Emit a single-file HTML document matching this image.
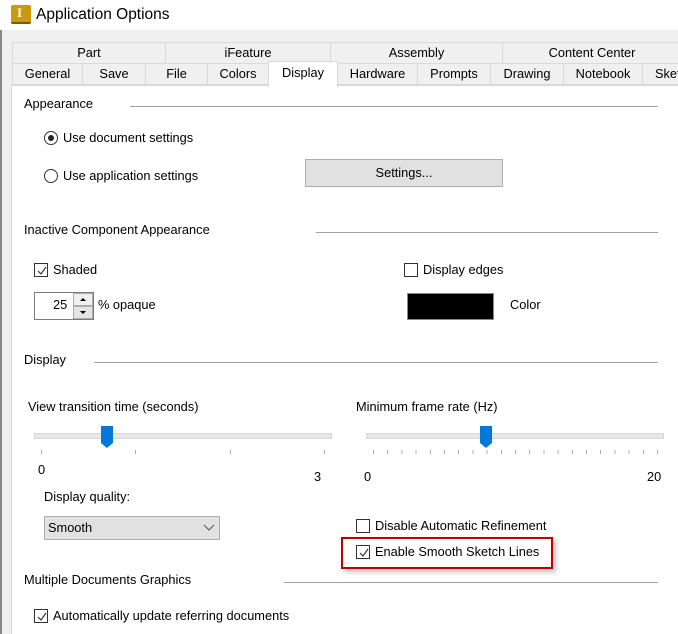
<!DOCTYPE html>
<html><head><style>
*{margin:0;padding:0;box-sizing:border-box}
html,body{width:678px;height:634px;overflow:hidden}
body{background:#f0f0f0;font-family:"Liberation Sans",sans-serif;font-size:12.8px;color:#000;position:relative}
.a{position:absolute}
.t{position:absolute;white-space:nowrap;line-height:14px}
.tab{position:absolute;background:#f0f0f0;border:1px solid #d9d9d9;text-align:center;line-height:20px}
.ln{position:absolute;height:1px;background:#a0a0a0}
.cb{position:absolute;width:14px;height:14px;border:1px solid #333;background:#fff}
.cb svg{position:absolute;left:1px;top:1px}
.rd{position:absolute;width:14px;height:14px;border:1px solid #333;border-radius:50%;background:#fff}
.tk{position:absolute;width:1px;height:4px;background:#b0b0b0;top:450px}
</style></head><body>
<div class="a" style="left:0;top:0;width:678px;height:30px;background:#fff"></div>
<div class="a" style="left:11px;top:5px;width:20px;height:19px;background:#c79a12;border-radius:2px;border-bottom:2px solid #7a5b05"></div>
<div class="t" style="left:17px;top:6px;font-weight:bold;color:#fff;font-family:'Liberation Serif',serif;font-size:13px">I</div>
<div class="t" style="left:36px;top:6px;font-size:15.5px;line-height:17px">Application Options</div>
<div class="a" style="left:0;top:30px;width:2px;height:604px;background:#888"></div>

<div class="tab" style="left:12px;top:42px;width:154px;height:22px">Part</div>
<div class="tab" style="left:165px;top:42px;width:166px;height:22px">iFeature</div>
<div class="tab" style="left:330px;top:42px;width:173px;height:22px">Assembly</div>
<div class="tab" style="left:502px;top:42px;width:180px;height:22px">Content Center</div>
<div class="tab" style="left:12px;top:63px;width:71px;height:22px">General</div>
<div class="tab" style="left:82px;top:63px;width:64px;height:22px">Save</div>
<div class="tab" style="left:145px;top:63px;width:63px;height:22px">File</div>
<div class="tab" style="left:207px;top:63px;width:62px;height:22px">Colors</div>
<div class="tab" style="left:337px;top:63px;width:81px;height:22px">Hardware</div>
<div class="tab" style="left:417px;top:63px;width:74px;height:22px">Prompts</div>
<div class="tab" style="left:490px;top:63px;width:74px;height:22px">Drawing</div>
<div class="tab" style="left:563px;top:63px;width:80px;height:22px">Notebook</div>
<div class="tab" style="left:642px;top:63px;width:60px;height:22px;text-align:left;padding-left:12px">Sketch</div>

<div class="a" style="left:11px;top:85px;width:680px;height:560px;background:#fff;border-left:1px solid #d9d9d9;border-top:1px solid #d9d9d9"></div>
<div class="a" style="left:268px;top:61px;width:70px;height:26px;background:#fff;border:1px solid #d9d9d9;border-bottom:none;text-align:center;line-height:22px">Display</div>

<div class="t" style="left:24px;top:97px">Appearance</div>
<div class="ln" style="left:130px;top:106px;width:528px"></div>
<div class="rd" style="left:44px;top:131px"><div class="a" style="left:3px;top:3px;width:6px;height:6px;border-radius:50%;background:#222"></div></div>
<div class="t" style="left:63px;top:131px">Use document settings</div>
<div class="rd" style="left:44px;top:169px"></div>
<div class="t" style="left:63px;top:169px">Use application settings</div>
<div class="a" style="left:305px;top:159px;width:198px;height:28px;background:#e1e1e1;border:1px solid #adadad;text-align:center;line-height:26px">Settings...</div>

<div class="t" style="left:24px;top:223px">Inactive Component Appearance</div>
<div class="ln" style="left:316px;top:232px;width:342px"></div>
<div class="cb" style="left:34px;top:263px"><svg width="12" height="12"><path d="M2 6 L5 9 L10 2" stroke="#333" fill="none" stroke-width="1.2"/></svg></div>
<div class="t" style="left:53px;top:263px">Shaded</div>
<div class="a" style="left:34px;top:292px;width:60px;height:28px;border:1px solid #7a7a7a;background:#fff"></div>
<div class="t" style="left:53px;top:298px">25</div>
<div class="a" style="left:73px;top:293px;width:20px;height:13px;background:#f0f0f0;border:1px solid #adadad"></div>
<div class="a" style="left:73px;top:306px;width:20px;height:13px;background:#e5e5e5;border:1px solid #adadad"></div>
<svg class="a" style="left:73px;top:293px" width="20" height="26"><path d="M7 8 L10 5 L13 8Z M7 18 L10 21 L13 18Z" fill="#000"/></svg>
<div class="t" style="left:98px;top:298px">% opaque</div>
<div class="cb" style="left:404px;top:263px"></div>
<div class="t" style="left:423px;top:263px">Display edges</div>
<div class="a" style="left:407px;top:293px;width:87px;height:27px;background:#000;border:1px solid #888"></div>
<div class="t" style="left:510px;top:298px">Color</div>

<div class="t" style="left:24px;top:353px">Display</div>
<div class="ln" style="left:94px;top:362px;width:564px"></div>
<div class="t" style="left:28px;top:400px">View transition time (seconds)</div>
<div class="a" style="left:34px;top:433px;width:298px;height:6px;background:#e7e7e7;border:1px solid #d6d6d6"></div>
<svg class="a" style="left:101px;top:426px" width="13" height="23"><path d="M0 0H12V17L6 22L0 17Z" fill="#0078d7"/></svg>
<div class="tk" style="left:41px"></div><div class="tk" style="left:135px"></div><div class="tk" style="left:230px"></div><div class="tk" style="left:324px"></div>
<div class="t" style="left:38px;top:463px">0</div>
<div class="t" style="left:314px;top:470px">3</div>

<div class="t" style="left:356px;top:400px">Minimum frame rate (Hz)</div>
<div class="a" style="left:366px;top:433px;width:298px;height:6px;background:#e7e7e7;border:1px solid #d6d6d6"></div>
<svg class="a" style="left:480px;top:426px" width="13" height="23"><path d="M0 0H12V17L6 22L0 17Z" fill="#0078d7"/></svg>
<div class="a" style="left:373px;top:450px;width:286px;height:4px;background:repeating-linear-gradient(90deg,#b0b0b0 0 1px,transparent 1px 14.2px)"></div>
<div class="t" style="left:364px;top:470px">0</div>
<div class="t" style="left:647px;top:470px">20</div>

<div class="t" style="left:44px;top:490px">Display quality:</div>
<div class="a" style="left:44px;top:516px;width:176px;height:24px;background:#e1e1e1;border:1px solid #adadad"></div>
<div class="t" style="left:48px;top:521px">Smooth</div>
<svg class="a" style="left:203px;top:524px" width="12" height="8"><path d="M1 1L6 6L11 1" stroke="#555" fill="none"/></svg>

<div class="cb" style="left:356px;top:519px"></div>
<div class="t" style="left:375px;top:519px">Disable Automatic Refinement</div>
<div class="a" style="left:341px;top:537px;width:212px;height:32px;border:2px solid #c00000;box-shadow:3px 3px 5px rgba(0,0,0,.25)"></div>
<div class="cb" style="left:356px;top:545px"><svg width="12" height="12"><path d="M2 6 L5 9 L10 2" stroke="#333" fill="none" stroke-width="1.2"/></svg></div>
<div class="t" style="left:375px;top:545px">Enable Smooth Sketch Lines</div>

<div class="t" style="left:24px;top:573px">Multiple Documents Graphics</div>
<div class="ln" style="left:284px;top:582px;width:374px"></div>
<div class="cb" style="left:34px;top:609px"><svg width="12" height="12"><path d="M2 6 L5 9 L10 2" stroke="#333" fill="none" stroke-width="1.2"/></svg></div>
<div class="t" style="left:53px;top:609px">Automatically update referring documents</div>
</body></html>
